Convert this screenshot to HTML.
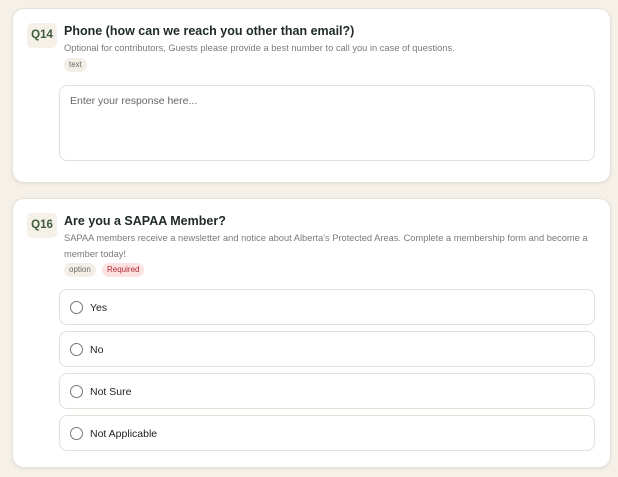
<!DOCTYPE html><html><head><style>
body{margin:0;width:618px;height:477px;background:#f5f1e9;font-family:"Liberation Sans",sans-serif;position:relative;overflow:hidden}
.card{position:absolute;left:12px;width:597px;background:#fff;border:1px solid #e6e2da;border-radius:12px;box-shadow:0 1px 3px rgba(0,0,0,.08)}
.badge{position:absolute;left:14px;top:14px;width:30px;height:25px;background:#f5f1e9;border-radius:5px;color:#3d5a3a;font-weight:bold;font-size:11.5px;line-height:25px;text-align:center}
.title{position:absolute;left:51px;top:15px;font-weight:bold;font-size:12.5px;color:#1f2a24}
.desc{position:absolute;left:51px;top:31px;width:535px;font-size:9.3px;color:#7a7a7a;line-height:16px}
.tag{position:absolute;height:14px;line-height:14px;font-size:8px;padding:0 5px;border-radius:7px;background:#f3efe7;color:#6b6b6b}
.req{background:#fde2e2;color:#b0283a}
.box{position:absolute;left:46px;width:534px;border:1px solid #e3e0da;border-radius:8px;background:#fff}
.opt{height:34px}
.opt span{position:absolute;left:10px;top:11px;width:11px;height:11px;border:1px solid #777;border-radius:50%}
.opt b{position:absolute;left:30px;top:12px;font-weight:normal;font-size:10.5px;color:#222}
</style></head><body>
<div class="card" style="top:8px;height:173px">
<div class="badge">Q14</div>
<div class="title">Phone (how can we reach you other than email?)</div>
<div class="desc">Optional for contributors, Guests please provide a best number to call you in case of questions.</div>
<div class="tag" style="left:51px;top:49px">text</div>
<div class="box" style="top:76px;height:74px"><div style="position:absolute;left:10px;top:9px;font-size:10.5px;color:#666">Enter your response here...</div></div>
</div>
<div class="card" style="top:198px;height:268px">
<div class="badge">Q16</div>
<div class="title">Are you a SAPAA Member?</div>
<div class="desc">SAPAA members receive a newsletter and notice about Alberta's Protected Areas. Complete a membership form and become a member today!</div>
<div class="tag" style="left:51px;top:64px">option</div>
<div class="tag req" style="left:89px;top:64px">Required</div>
<div class="box opt" style="top:90px"><span></span><b>Yes</b></div>
<div class="box opt" style="top:132px"><span></span><b>No</b></div>
<div class="box opt" style="top:174px"><span></span><b>Not Sure</b></div>
<div class="box opt" style="top:216px"><span></span><b>Not Applicable</b></div>
</div>
</body></html>
